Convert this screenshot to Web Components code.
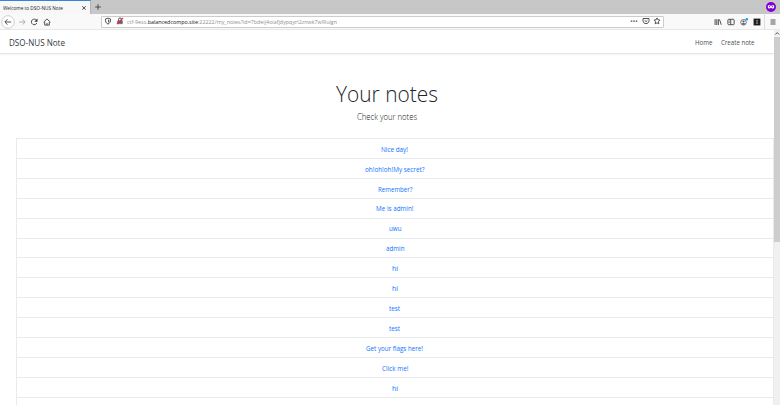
<!DOCTYPE html>
<html lang="en"><head><meta charset="utf-8"><title>Welcome to DSO-NUS Note</title>
<style>html,body{margin:0;height:100%;overflow:hidden;background:#fff;font-family:"Open Sans","Noto Sans",sans-serif}</style></head>
<body><browser-window></browser-window>
<script>
const define=(name,html,init)=>customElements.define(name,class extends HTMLElement{
  connectedCallback(){
    if(this.shadowRoot)return;
    this.attachShadow({mode:'open'}).innerHTML=html;
    if(init)init.call(this);
  }
});

// A label condensed horizontally so that its text spans `w` pixels.
define('fit-label','<style>:host{display:inline-block;white-space:nowrap;flex:none;text-align:left}span{display:inline-block;transform-origin:0 50%}</style><span><slot></slot></span>',function(){
  const w=+this.getAttribute('w'),s=this.shadowRoot.querySelector('span');
  if(!w)return;
  this.style.width=w+'px';
  s.style.transform=`scaleX(${w/s.getBoundingClientRect().width})`;
});

const icons={
  back:'<circle cx="8" cy="8" r="6.3" fill="#fff" stroke="#bbb" stroke-width=".7"/><path d="M11.2 8H5M7.5 5.3 4.8 8l2.7 2.7"/>',
  forward:'<path stroke="#aaa" d="M5 8h6M8.7 5.5 11.2 8l-2.5 2.5"/>',
  reload:'<path d="M10.5 6.3A2.8 2.8 0 1 0 10.8 9"/><path fill="#333" stroke="none" d="M11.5 4.6v3.2H8.3z"/>',
  home:'<path d="M4.6 8.2 8 4.9l3.4 3.3M5.7 8v3.1h4.6V8M8 11V9"/>',
  shield:'<path d="M8 5.1 10.6 6c0 2.8-.7 4.2-2.6 5.1C6.1 10.2 5.4 8.8 5.4 6z"/><path fill="#555" stroke="none" d="M8 6.5v3.2c1-.6 1.3-1.5 1.4-2.8z"/>',
  lock:'<path fill="#666" stroke="#666" stroke-width=".7" d="M5.7 7.8h4.6v2.9H5.7z"/><path d="M6.5 7.6V6.5a1.5 1.5 0 0 1 3 0v1.1"/><path stroke="#e22850" stroke-width="1.1" d="M5 11 11 5"/>',
  dots:'<path fill="#444" stroke="none" d="M4.8 7.4h1.5v1.4H4.8zm2.5 0h1.5v1.4H7.3zm2.5 0h1.5v1.4H9.8z"/>',
  pocket:'<path d="M5 5.5h6v2.1c0 4-6 4-6 0zM6.6 7.3 8 8.6l1.4-1.3"/>',
  star:'<path d="m8 4.9.9 1.9 2.1.3-1.5 1.5.3 2.2L8 9.8l-1.8 1 .3-2.2L5 7.1l2.1-.3z"/>',
  library:'<path d="M5.1 5.2V11M6.8 5.2V11M8.4 5.2V11M9.5 5.5l1.8 5.3"/>',
  sidebar:'<rect x="4.9" y="5.3" width="6.2" height="5.4" rx=".8"/><path d="M7.7 5.5v5M5.9 7h.8M5.9 8.4h.8"/>',
  account:'<circle cx="7.5" cy="8.3" r="2.8" stroke-width=".7"/><circle cx="7.5" cy="7.5" r="1.1" fill="#555" stroke="none"/><path fill="#555" stroke="none" d="M5.5 9.8q2-1.8 4 0-2 2-4 0"/><circle cx="10.8" cy="5.2" r="1.3" fill="#00a9f2" stroke="none"/>',
  extension:'<rect x="4.6" y="4.6" width="6.8" height="6.8" fill="#1d1b1b" stroke="none"/><path stroke="#aaa" stroke-width=".7" d="M7.200 6.7h1.6M6.8 9.2h2.4M8 6v3.6"/>',
  menu:'<path d="M5.5 6h5M5.5 8h5M5.5 10h5"/>',
  close:'<path d="m6.2 6.2 3.5 3.5M9.7 6.2 6.2 9.7"/>',
  plus:'<path d="M8 5.2v5.6M5.2 8h5.6"/>',
  mask:'<circle cx="8" cy="8" r="5" fill="#8000d7" stroke="none"/><path fill="#fff" stroke="none" d="M4.8 7.5c.2-1.5 2.2-1.3 3.2-.6 1-.7 3-.9 3.2.6.2 2.3-2 2.7-3.2 1.3-1.2 1.4-3.4 1-3.2-1.3"/><path stroke="#8000d7" d="M6 7.7h1.1M8.9 7.7H10"/>'
};
define('ui-icon','<style>:host{display:block;width:16px;height:16px;flex:none}svg{display:block}</style>',function(){
  this.shadowRoot.innerHTML+=`<svg width="16" height="16" viewBox="0 0 16 16" fill="none" stroke="#484848" stroke-width=".95">${icons[this.getAttribute('name')]}</svg>`;
});

define('tab-strip',`<style>
:host{display:flex;height:14px;background:#c7c7c7;align-items:center;font-size:5.6px;color:#222}
.tab{display:flex;box-sizing:border-box;width:91px;height:14px;background:#f7f7f8;border-top:1px solid #3286d5;border-right:1px solid #b4b4b4;align-items:center;justify-content:space-between;padding-left:3px;line-height:12px}
.tab ui-icon{margin-right:-2px}
.mask{margin-left:auto;margin-right:1px}
.new{margin-left:-1px}
</style><div class="tab"><fit-label w="60">Welcome to DSO-NUS Note</fit-label><ui-icon name="close"></ui-icon></div><ui-icon class="new" name="plus"></ui-icon><ui-icon class="mask" name="mask"></ui-icon>`);

define('nav-toolbar',`<style>
:host{display:flex;box-sizing:border-box;height:16px;background:#f9f9fa;align-items:center;border-bottom:1px solid #e7e7e8;font-size:6px}
.nav{display:flex;width:101px;height:16px;align-items:center}
.back{margin-right:-2.5px}.fwd{margin-right:-3.5px}.rel{margin-right:-3px}
.url{box-sizing:border-box;display:flex;width:563px;height:12px;border:1px solid #ccc;border-radius:1px;background:#fff;align-items:center;color:#8f8f94;line-height:11px}
.url ui-icon{margin-top:-.5px}
.url fit-label{margin-top:1px}
.shield{margin-left:-2px}.lock{margin-left:-4px;margin-right:-1.5px}
b{font-weight:400;color:#111}
.dots{margin-left:auto}.pocket{margin-left:-4px}.star{margin:0 -2px 0 -5px}
.tools{display:flex;margin-left:45.5px;align-items:center}
.tools ui-icon{margin-right:-3px}
.menu{margin-left:auto;margin-right:-1px;border-left:1px solid #ddd}
</style><div class="nav"><ui-icon class="back" name="back"></ui-icon><ui-icon class="fwd" name="forward"></ui-icon><ui-icon class="rel" name="reload"></ui-icon><ui-icon name="home"></ui-icon></div>
<div class="url"><ui-icon class="shield" name="shield"></ui-icon><ui-icon class="lock" name="lock"></ui-icon><fit-label w="210">ctf-9ess.<b>balancedcompo.site</b>:22222/my_notes?id=7bdeij4oiafjdypqyrl2znwk7w9lulgn</fit-label><ui-icon class="dots" name="dots"></ui-icon><ui-icon class="pocket" name="pocket"></ui-icon><ui-icon class="star" name="star"></ui-icon></div>
<div class="tools"><ui-icon name="library"></ui-icon><ui-icon name="sidebar"></ui-icon><ui-icon name="account"></ui-icon><ui-icon name="extension"></ui-icon></div><ui-icon class="menu" name="menu"></ui-icon>`);

define('site-header',`<style>
:host{display:flex;box-sizing:border-box;height:24px;background:#fff;border-bottom:1px solid #e4e5e6;box-shadow:0 1px 2px #0000000d;align-items:center;padding:2px 19.5px 0 9px;color:#343a40;font-size:8.6px;line-height:20px}
nav{margin-left:auto;display:flex;gap:8.5px;font-size:6.9px;color:#495057}
</style><fit-label w="56">DSO-NUS Note</fit-label><nav><fit-label w="17.5">Home</fit-label><fit-label w="33.5">Create note</fit-label></nav>`);

define('page-heading',`<style>
:host{display:flex;flex-direction:column;align-items:center;height:84px;box-sizing:border-box;color:#212529}
h1{font-weight:300;font-size:22.5px;line-height:30px;margin:25px 0 0}
p{font-weight:300;font-size:8.4px;line-height:12px;margin:2px 0 0;color:#212529}
</style><h1><fit-label w="102">Your notes</fit-label></h1><p><fit-label w="60">Check your notes</fit-label></p>`);

define('note-row',`<style>
:host{display:flex;box-sizing:border-box;height:19.92px;border-bottom:1px solid #e9eaeb;align-items:center;justify-content:center;color:#0d73ff;font-size:7px;line-height:12px;padding-top:2.6px}
</style><slot></slot>`);

define('note-list',`<style>
:host{display:block;margin-left:15.5px;border:1px solid #e9eaeb;border-bottom:0}
</style>`,function(){
  const notes=[['Nice day!',27],['oh!oh!oh!My secret?',59.5],['Remember?',34.5],['Me is admin!',37.5],['uwu',12.5],['admin',18.5],['hi',6],['hi',6],['test',11],['test',11],['Get your flags here!',57],['Click me!',26.5],['hi',6]];
  this.shadowRoot.innerHTML+=notes.map(([t,w])=>`<note-row><fit-label w="${w}">${t}</fit-label></note-row>`).join('')+'<note-row></note-row>';
});

define('scroll-bar',`<style>
:host{display:flex;flex-direction:column;width:6px;background:#f0f0f0}
svg{display:block}i{display:block;height:205px;background:#cdcdcd}
</style><svg width="6" height="7" viewBox="0 0 6 7" fill="none" stroke="#555"><path d="m1.3 4.5 1.9-1.9 1.9 1.9"/></svg><i></i>`);

define('browser-window',`<style>
:host{display:flex;flex-direction:column;height:405px;width:780px;overflow:hidden}
.view{display:flex;flex:1;min-height:0}main{width:774px;overflow:hidden}
</style><tab-strip></tab-strip><nav-toolbar></nav-toolbar><div class="view"><main><site-header></site-header><page-heading></page-heading><note-list></note-list></main><scroll-bar></scroll-bar></div>`);
</script></body></html>
